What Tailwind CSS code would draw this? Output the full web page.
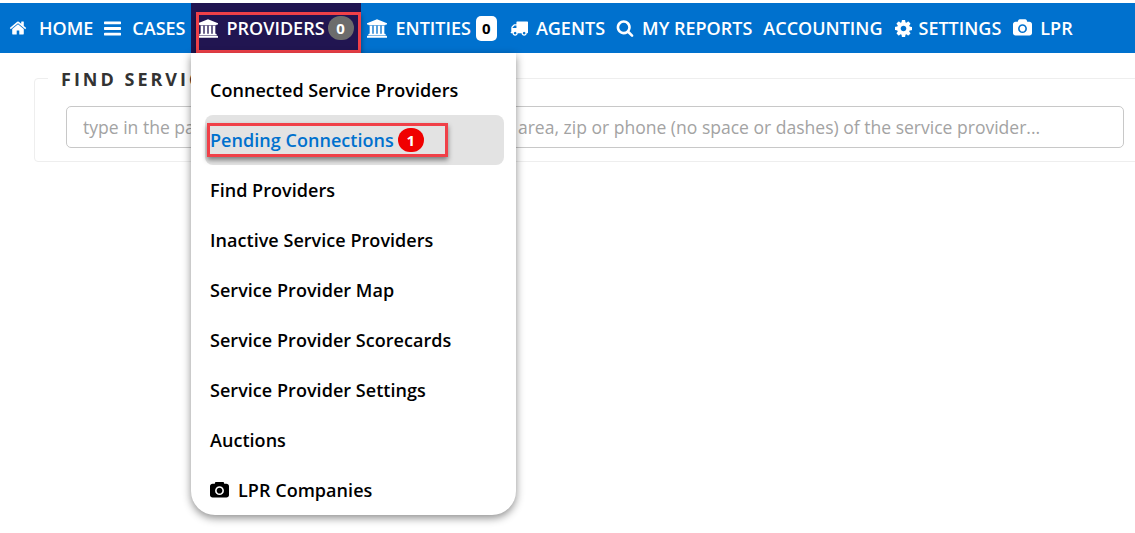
<!DOCTYPE html>
<html lang="en">
<head>
    <meta charset="UTF-8">
    <title>Find Service Providers</title>
    <script src="https://cdn.jsdelivr.net/npm/@tailwindcss/browser@4"></script>
</head>
<body class="relative h-[533px] overflow-hidden bg-white font-['Open_Sans',sans-serif]">

    <!-- Top nav -->
    <nav class="mt-[3px] flex h-[50px] items-center bg-[#0071ce] pl-[9px] text-[18px] font-semibold whitespace-nowrap text-white">
        <a class="flex items-center gap-[12px]">
            <svg class="h-[18px] w-[18px] fill-white" viewBox="0 128 1792 1536"><path d="M1472 992v480q0 26-19 45t-45 19h-384v-384h-256v384h-384q-26 0-45-19t-19-45v-480q0-1 .5-3t.5-3l575-474 575 474q1 2 1 6zm223-69l-62 74q-8 9-21 11h-3q-13 0-21-7l-692-577-692 577q-12 8-24 7-13-2-21-11l-62-74q-8-10-7-23.5t11-21.5l719-599q32-26 76-26t76 26l244 204v-195q0-14 9-23t23-9h192q14 0 23 9t9 23v408l219 182q10 8 11 21.5t-7 23.5z"/></svg>
            HOME
        </a>
        <a class="ml-[11px] flex items-center gap-[11px]">
            <svg class="h-[17px] w-[17px] fill-white" viewBox="128 128 1536 1536"><path d="M1664 1344v128q0 26-19 45t-45 19h-1408q-26 0-45-19t-19-45v-128q0-26 19-45t45-19h1408q26 0 45 19t19 45zm0-512v128q0 26-19 45t-45 19h-1408q-26 0-45-19t-19-45v-128q0-26 19-45t45-19h1408q26 0 45 19t19 45zm0-512v128q0 26-19 45t-45 19h-1408q-26 0-45-19t-19-45v-128q0-26 19-45t45-19h1408q26 0 45 19t19 45z"/></svg>
            CASES
        </a>

        <!-- Active item, red box is a markup on the screenshot -->
        <a class="relative ml-[6px] flex h-[50px] w-[170px] items-center bg-[#211551] pl-[7px]">
            <svg class="h-[19px] w-[20px] fill-white" viewBox="0 0 1920 1792"><path d="M960 0l960 384v128h-128q0 26-20.5 45t-48.5 19h-1526q-28 0-48.5-19t-20.5-45h-128v-128zm-704 640h256v768h128v-768h256v768h128v-768h256v768h128v-768h256v768h59q28 0 48.5 19t20.5 45v64h-1664v-64q0-26 20.5-45t48.5-19h59v-768zm1595 960q28 0 48.5 19t20.5 45v128h-1920v-128q0-26 20.5-45t48.5-19h1782z"/></svg>
            <span class="ml-[8px]">PROVIDERS</span>
            <span class="ml-[3px] flex h-[24px] w-[26px] items-center justify-center rounded-full bg-[#6c6c6c] text-[15px] font-bold">0</span>
            <span class="absolute top-[9px] left-[5px] h-[41px] w-[165px] border-[3px] border-[#f04048] shadow-[0_3px_5px_rgba(0,0,0,0.45)]"></span>
        </a>

        <a class="ml-[6px] flex items-center">
            <svg class="h-[19px] w-[20px] fill-white" viewBox="0 0 1920 1792"><path d="M960 0l960 384v128h-128q0 26-20.5 45t-48.5 19h-1526q-28 0-48.5-19t-20.5-45h-128v-128zm-704 640h256v768h128v-768h256v768h128v-768h256v768h128v-768h256v768h59q28 0 48.5 19t20.5 45v64h-1664v-64q0-26 20.5-45t48.5-19h59v-768zm1595 960q28 0 48.5 19t20.5 45v128h-1920v-128q0-26 20.5-45t48.5-19h1782z"/></svg>
            <span class="ml-[8px]">ENTITIES</span>
            <span class="ml-[5px] flex h-[25px] w-[21px] items-center justify-center rounded-[5px] bg-white text-[15px] font-bold text-black">0</span>
        </a>
        <a class="ml-[13px] flex items-center gap-[8px]">
            <svg class="h-[18px] w-[18px] fill-white" viewBox="0 128 1792 1536"><path d="M640 1408q0-52-38-90t-90-38-90 38-38 90 38 90 90 38 90-38 38-90zm-384-512h384v-256h-158q-13 0-22 9l-195 195q-9 9-9 22v30zm1280 512q0-52-38-90t-90-38-90 38-38 90 38 90 90 38 90-38 38-90zm256-1088v1024q0 15-4 26.5t-13.5 18.5-16.5 11.5-23.5 6-22.5 2-25.5 0-22.5-.5q0 106-75 181t-181 75-181-75-75-181h-384q0 106-75 181t-181 75-181-75-75-181h-64q-3 0-22.5.5t-25.5 0-22.5-2-23.5-6-16.5-11.5-13.5-18.5-4-26.5q0-26 19-45t45-19v-320q0-8-.5-35t0-38 2.5-34.5 6.5-37 14-30.5 22.5-30l198-198q19-19 50.5-32t58.5-13h160v-192q0-26 19-45t45-19h1024q26 0 45 19t19 45z"/></svg>
            AGENTS
        </a>
        <a class="ml-[11px] flex items-center gap-2">
            <svg class="h-[18px] w-[18px] fill-white" viewBox="0 0 1792 1792"><path d="M1216 832q0-185-131.5-316.5t-316.5-131.5-316.5 131.5-131.5 316.5 131.5 316.5 316.5 131.5 316.5-131.5 131.5-316.5zm512 832q0 52-38 90t-90 38q-54 0-90-38l-343-342q-179 124-399 124-143 0-273.5-55.5t-225-150-150-225-55.5-273.5 55.5-273.5 150-225 225-150 273.5-55.5 273.5 55.5 225 150 150 225 55.5 273.5q0 220-124 399l343 343q37 37 37 90z"/></svg>
            MY REPORTS
        </a>
        <a class="ml-[11px]">ACCOUNTING</a>
        <a class="ml-3 flex items-center gap-[7px]">
            <svg class="h-[17px] w-[17px] fill-white" viewBox="128 128 1536 1536"><path d="M1152 896q0-106-75-181t-181-75-181 75-75 181 75 181 181 75 181-75 75-181zm512-109v222q0 12-8 23t-20 13l-185 28q-19 54-39 91 35 50 107 138 10 12 10 25t-9 23q-27 37-99 108t-94 71q-12 0-26-9l-138-108q-44 23-91 38-16 136-29 186-7 28-36 28h-222q-14 0-24.5-8.5t-11.5-21.5l-28-184q-49-16-90-37l-141 107q-10 9-25 9-14 0-25-11-126-114-165-168-7-10-7-23 0-12 8-23 15-21 51-66.5t54-70.5q-27-50-41-99l-183-27q-13-2-21-12.5t-8-23.5v-222q0-12 8-23t19-13l186-28q14-46 39-92-40-57-107-138-10-12-10-24 0-10 9-23 26-36 98.5-107.5t94.5-71.5q13 0 26 10l138 107q44-23 91-38 16-136 29-186 7-28 36-28h222q14 0 24.5 8.5t11.5 21.5l28 184q49 16 90 37l142-107q9-9 24-9 13 0 25 10 129 119 165 170 7 8 7 22 0 12-8 23-15 21-51 66.5t-54 70.5q26 50 41 98l183 28q13 2 21 12.5t8 23.5z"/></svg>
            SETTINGS
        </a>
        <a class="ml-3 flex items-center gap-[8px]">
            <svg class="h-[18px] w-[19px] fill-white" viewBox="0 128 1920 1536"><path d="M896 672q119 0 203.5 84.5t84.5 203.5-84.5 203.5-203.5 84.5-203.5-84.5-84.5-203.5 84.5-203.5 203.5-84.5zm704-416q106 0 181 75t75 181v896q0 106-75 181t-181 75h-1408q-106 0-181-75t-75-181v-896q0-106 75-181t181-75h224l51-136q19-49 69.5-84.5t103.5-35.5h512q53 0 103.5 35.5t69.5 84.5l51 136h224zm-704 1152q185 0 316.5-131.5t131.5-316.5-131.5-316.5-316.5-131.5-316.5 131.5-131.5 316.5 131.5 316.5 316.5 131.5z" transform="translate(64 0)"/></svg>
            LPR
        </a>
    </nav>

    <!-- Find service providers panel -->
    <fieldset class="mt-[13px] ml-[34px] h-[96px] w-[1110px] rounded-[4px] border border-[#eeeeee] px-[31px]">
        <legend class="relative top-[1px] ml-[-18px] px-[13px] text-[18px] leading-[24px] font-bold tracking-[3px] whitespace-nowrap text-[#333333]">FIND SERVICE PROVIDERS</legend>
        <input type="text" placeholder="type in the partial name, street addresses, city, state, area, zip or phone (no space or dashes) of the service provider..."
            class="mt-[16px] h-[42px] w-[1058px] rounded-[5px] border border-[#c8c8c8] px-4 text-[17.55px] text-[#333333] placeholder:text-[#a3a3a3] focus:outline-none">
    </fieldset>

    <!-- Providers dropdown -->
    <div class="absolute top-[53px] left-[191px] h-[462px] w-[325px] rounded-b-[24px] bg-white pt-[12px] pr-[12px] pl-[14px] text-[18px] tracking-[0.04px] font-semibold text-black shadow-[0_3px_8px_rgba(0,0,0,0.45)]">
        <a class="flex h-[50px] items-center px-[5px]">Connected Service Providers</a>
        <a class="relative flex h-[50px] items-center rounded-[8px] bg-[#e3e3e3] px-[5px] text-[#0071ce]">
            Pending Connections
            <span class="ml-[4px] flex h-[24px] w-[26px] items-center justify-center rounded-full bg-[#f00000] text-[15px] font-bold text-white">1</span>
            <span class="absolute top-[8px] left-[2px] h-[34px] w-[241px] border-[3px] border-[#f04048] shadow-[0_3px_5px_rgba(0,0,0,0.45)]"></span>
        </a>
        <a class="flex h-[50px] items-center px-[5px]">Find Providers</a>
        <a class="flex h-[50px] items-center px-[5px]">Inactive Service Providers</a>
        <a class="flex h-[50px] items-center px-[5px]">Service Provider Map</a>
        <a class="flex h-[50px] items-center px-[5px]">Service Provider Scorecards</a>
        <a class="flex h-[50px] items-center px-[5px]">Service Provider Settings</a>
        <a class="flex h-[50px] items-center px-[5px]">Auctions</a>
        <a class="flex h-[50px] items-center gap-[9px] px-[5px]">
            <svg class="h-[16px] w-[19px] fill-black" viewBox="0 128 1920 1536"><path d="M896 672q119 0 203.5 84.5t84.5 203.5-84.5 203.5-203.5 84.5-203.5-84.5-84.5-203.5 84.5-203.5 203.5-84.5zm704-416q106 0 181 75t75 181v896q0 106-75 181t-181 75h-1408q-106 0-181-75t-75-181v-896q0-106 75-181t181-75h224l51-136q19-49 69.5-84.5t103.5-35.5h512q53 0 103.5 35.5t69.5 84.5l51 136h224zm-704 1152q185 0 316.5-131.5t131.5-316.5-131.5-316.5-316.5-131.5-316.5 131.5-131.5 316.5 131.5 316.5 316.5 131.5z" transform="translate(64 0)"/></svg>
            LPR Companies
        </a>
    </div>

</body>
</html>
